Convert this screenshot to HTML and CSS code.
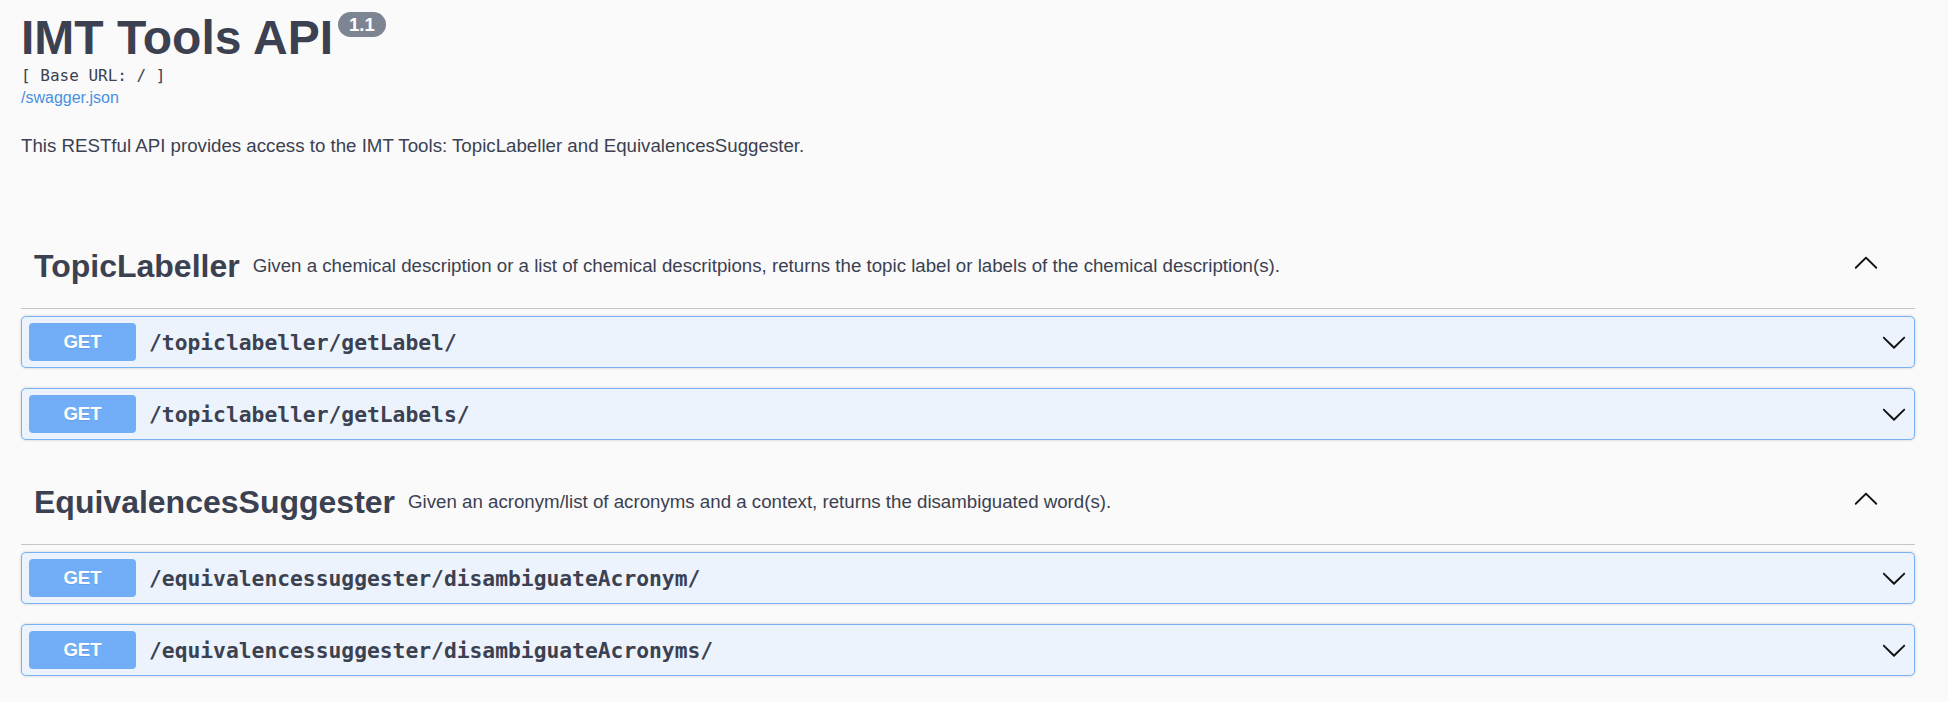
FILE: index.html
```html
<!DOCTYPE html>
<html lang="en">
<head>
<meta charset="utf-8">
<title>IMT Tools API</title>
<link rel="stylesheet" href="styles.css">
</head>
<body>
<svg class="defs" width="0" height="0" aria-hidden="true">
  <defs>
    <symbol id="arrow-down" viewBox="0 0 20 20"><path d="M17.418 6.109c.272-.268.709-.268.979 0s.271.701 0 .969l-7.908 7.83c-.27.268-.707.268-.979 0l-7.908-7.83c-.27-.268-.27-.701 0-.969.271-.268.709-.268.979 0L10 13.25l7.418-7.141z"/></symbol>
    <symbol id="arrow-up" viewBox="0 0 20 20"><path d="M17.418 14.908c.272.268.709.268.979 0s.271-.701 0-.969l-7.908-7.83c-.27-.268-.707-.268-.979 0l-7.908 7.83c-.27.268-.27.701 0 .969.271.268.709.268.979 0L10 7.767l7.418 7.141z"/></symbol>
  </defs>
</svg>
<div class="page">
  <div class="info">
    <div class="title-row">
      <h2 class="title">IMT Tools API</h2>
      <span class="version">1.1</span>
    </div>
    <pre class="base-url">[ Base URL: / ]</pre>
    <a class="spec-link" href="#">/swagger.json</a>
    <p class="description">This RESTful API provides access to the IMT Tools: TopicLabeller and EquivalencesSuggester.</p>
  </div>

  <div class="tags">
    <section class="tag-section">
      <h3 class="tag">
        <span class="tag-name">TopicLabeller</span>
        <small class="tag-desc">Given a chemical description or a list of chemical descritpions, returns the topic label or labels of the chemical description(s).</small>
        <svg class="tag-arrow"><use href="#arrow-up"></use></svg>
      </h3>
      <div class="op">
        <span class="method">GET</span>
        <span class="path">/topiclabeller/getLabel/</span>
        <svg class="op-arrow"><use href="#arrow-down"></use></svg>
      </div>
      <div class="op">
        <span class="method">GET</span>
        <span class="path">/topiclabeller/getLabels/</span>
        <svg class="op-arrow"><use href="#arrow-down"></use></svg>
      </div>
    </section>

    <section class="tag-section">
      <h3 class="tag">
        <span class="tag-name">EquivalencesSuggester</span>
        <small class="tag-desc">Given an acronym/list of acronyms and a context, returns the disambiguated word(s).</small>
        <svg class="tag-arrow"><use href="#arrow-up"></use></svg>
      </h3>
      <div class="op">
        <span class="method">GET</span>
        <span class="path">/equivalencessuggester/disambiguateAcronym/</span>
        <svg class="op-arrow"><use href="#arrow-down"></use></svg>
      </div>
      <div class="op">
        <span class="method">GET</span>
        <span class="path">/equivalencessuggester/disambiguateAcronyms/</span>
        <svg class="op-arrow"><use href="#arrow-down"></use></svg>
      </div>
    </section>
  </div>
</div>
</body>
</html>
```

FILE: styles.css
```css
* {
  box-sizing: border-box;
}

html,
body {
  margin: 0;
  padding: 0;
  background: #fafafa;
}

body {
  font-family: "Liberation Sans", Arial, sans-serif;
  color: #3b4151;
}

.defs {
  position: absolute;
  width: 0;
  height: 0;
  overflow: hidden;
}

.page {
  padding: 0 33px 0 21px;
}

.info {
  padding-top: 10px;
}

.title-row {
  display: flex;
  align-items: flex-start;
}

.title {
  margin: 0;
  font-size: 48px;
  line-height: 56px;
  font-weight: 700;
  color: #3b4151;
}

.version {
  margin: 2px 0 0 5px;
  height: 25px;
  padding: 0 11px;
  border-radius: 13px;
  background: #7d8492;
  color: #fff;
  font-size: 18.5px;
  font-weight: 700;
  line-height: 25px;
}

.base-url {
  margin: 0;
  font-family: "DejaVu Sans Mono", monospace;
  font-size: 16px;
  line-height: 20px;
  color: #3b4151;
}

.spec-link {
  display: block;
  margin-top: 1px;
  font-size: 16px;
  line-height: 21px;
  color: #4990e2;
  text-decoration: none;
}

.description {
  margin: 26px 0 0;
  font-size: 18.7px;
  line-height: 24px;
}

.tags {
  margin-top: 66px;
}

.tag {
  display: flex;
  align-items: center;
  height: 85px;
  margin: 0 0 7px;
  padding: 0 36px 0 13px;
  border-bottom: 1px solid #c3c5ca;
  font-weight: 700;
}

.tag-name {
  font-size: 32px;
  font-weight: 700;
  color: #3b4151;
}

.tag-desc {
  flex: 1;
  padding: 0 13px;
  font-size: 18.7px;
  font-weight: 400;
  color: #3b4151;
}

.tag-arrow {
  width: 26px;
  height: 26px;
  margin-bottom: 8px;
  fill: #111;
}

.op {
  display: flex;
  align-items: center;
  margin: 0 0 20px;
  padding: 6px 7px;
  border: 1px solid #79b2f7;
  border-radius: 5px;
  background: #ecf3fc;
  box-shadow: 0 0 3px rgba(0, 0, 0, 0.19);
}

.method {
  width: 107px;
  height: 38px;
  line-height: 38px;
  text-align: center;
  background: #72aef8;
  color: #fff;
  font-size: 18.6px;
  font-weight: 700;
  border-radius: 4px;
  text-shadow: 0 1px 0 rgba(0, 0, 0, 0.1);
}

.path {
  flex: 1;
  padding: 0 13px;
  font-family: "DejaVu Sans Mono", monospace;
  font-size: 21.3px;
  font-weight: 700;
  color: #3b4151;
}

.op-arrow {
  width: 26px;
  height: 26px;
  fill: #111;
}
```
